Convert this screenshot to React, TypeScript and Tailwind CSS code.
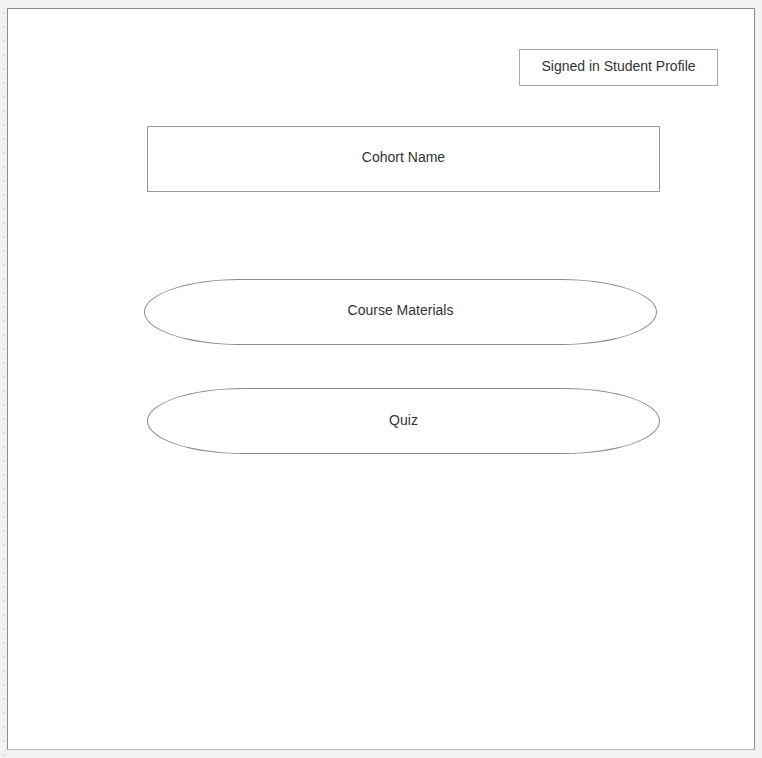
export default function App() {
  return (
    <div className="w-[762px] h-[758px] bg-[#f1f2f4] flex font-['Liberation_Sans',Arial,sans-serif] text-[#333] text-[14px]">
      {/* dotted ruler strip on the left */}
      <div className="w-[7px] h-full bg-[radial-gradient(circle,#cfd0d3_0.8px,transparent_1.2px)] bg-[length:7px_14px] bg-[position:0px_6px]" />

      <div className="pt-[8px]">
        <div className="w-[748px] h-[742px] bg-white border border-[#8c8c8c] border-b-[#b5b5b5] flex flex-col">
          {/* profile button */}
          <div className="ml-[511px] mt-[40px] w-[199px] h-[37px] pb-[2px] border border-[#a8a8a8] flex items-center justify-center">
            Signed in Student Profile
          </div>

          {/* cohort header */}
          <div className="ml-[139px] mt-[40px] w-[513px] h-[66px] pb-[3px] border border-[#999] flex items-center justify-center">
            Cohort Name
          </div>

          {/* nav pills */}
          <div className="ml-[136px] mt-[87px] w-[513px] h-[66px] pb-[3px] border border-[#8a8a8a] rounded-[96px/33px] flex items-center justify-center">
            Course Materials
          </div>
          <div className="ml-[139px] mt-[43px] w-[513px] h-[66px] pb-[2px] border border-[#8a8a8a] rounded-[96px/33px] flex items-center justify-center">
            Quiz
          </div>
        </div>
      </div>
    </div>
  )
}
